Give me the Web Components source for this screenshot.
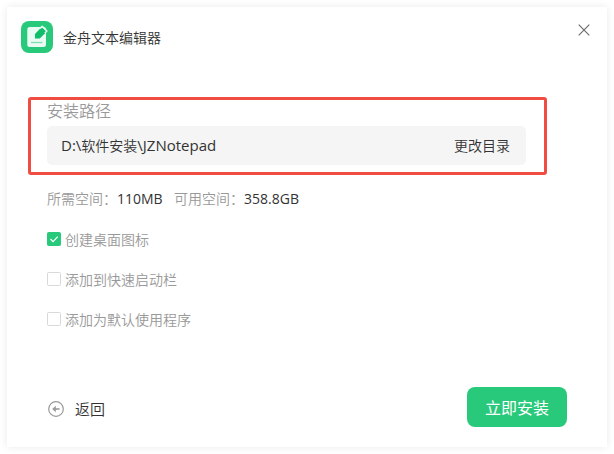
<!DOCTYPE html>
<html lang="zh-CN">
<head>
<meta charset="utf-8">
<title>金舟文本编辑器</title>
<style>
    body {
        margin: 0;
        padding: 7px;
        background-color: #fff;
        color: #333;
        font: 14px/20px "Open Sans", "Noto Sans CJK SC", sans-serif;
        overflow: hidden;
    }
</style>
</head>
<body>
<installer-window>
    <title-bar slot="title">金舟文本编辑器</title-bar>
    <path-field>
        <span slot="label">安装路径</span>
        <path-text>D:\<span>软件安装</span>\JZNotepad</path-text>
        <span slot="action">更改目录</span>
    </path-field>
    <disk-space>
        <span slot="need">110MB</span>
        <span slot="free">358.8GB</span>
    </disk-space>
    <check-option checked>创建桌面图标</check-option>
    <check-option>添加到快速启动栏</check-option>
    <check-option>添加为默认使用程序</check-option>
    <back-link slot="footer">返回</back-link>
    <primary-button slot="footer">立即安装</primary-button>
</installer-window>

<script>
function define(name, html) {
    const template = document.createElement('template');
    template.innerHTML = html;
    customElements.define(name, class extends HTMLElement {
        constructor() {
            super();
            const shadow = this.attachShadow({ mode: 'open' });
            shadow.appendChild(template.content.cloneNode(true));
        }
    });
}

// WINDOW
define('installer-window', `
    <style>
        :host {
            display: flex;
            flex-direction: column;
            box-sizing: border-box;
            width: 600px;
            height: 440px;
            background-color: #fff;
            box-shadow: 0 0 8px rgba(0, 0, 0, 0.09);
        }

        main {
            flex: 1;
            padding: 48px 40px 0;
        }

        footer {
            display: flex;
            justify-content: space-between;
            align-items: center;
            padding: 0 40px 20px;
        }
    </style>
    <slot name="title"></slot>
    <main><slot></slot></main>
    <footer><slot name="footer"></slot></footer>
`);

// TITLE BAR
define('title-bar', `
    <style>
        :host {
            display: flex;
            align-items: center;
            padding: 14px 16px 0 14px;
        }

        .name {
            flex: 1;
            margin: 2px 0 0 10px;
            font-weight: 350;
        }

        svg {
            display: block;
        }

        .close {
            margin-bottom: 14px;
        }
    </style>
    <svg width="32" height="32" viewBox="0 0 32 32">
        <rect width="32" height="32" rx="8" fill="#29c97b"/>
        <rect x="6.3" y="6" width="18.7" height="20" rx="2.5" fill="#e9fbf3"/>
        <path d="M14 17.5v-4.4l6.9-7.3 4.9 4.7-7 7z" fill="#10bd6a"/>
        <path d="M19.2 7.4l2-2 4.7 4.6-2 2.1" fill="none" stroke="#e9fbf3" stroke-width="1.5" stroke-linejoin="round"/>
        <path d="M10 21.5h11.5" stroke="#7fdfb1" stroke-width="1.3"/>
    </svg>
    <span class="name"><slot></slot></span>
    <svg class="close" width="14" height="14" viewBox="0 0 14 14">
        <path d="M1.7 1.7l10.6 10.6M12.3 1.7L1.7 12.3" stroke="#666" stroke-width="1.1"/>
    </svg>
`);

// INSTALL PATH
define('path-field', `
    <style>
        :host {
            display: block;
            position: relative;
            width: 479px;
        }

        .label {
            height: 25px;
            color: #999;
            font-size: 16px;
            font-weight: 350;
        }

        .box {
            display: flex;
            justify-content: space-between;
            align-items: center;
            box-sizing: border-box;
            height: 39px;
            padding: 0 16px 0 14px;
            border-radius: 5px;
            background-color: #f5f5f5;
            font-weight: 350;
        }

        /* highlight drawn over the field */
        .mark {
            position: absolute;
            inset: -4px -21px -10px -19px;
            border: 3px solid #f04c42;
            border-radius: 3px;
        }
    </style>
    <div class="label"><slot name="label"></slot></div>
    <div class="box"><slot></slot><slot name="action"></slot></div>
    <div class="mark"></div>
`);

define('path-text', `
    <style>
        :host {
            display: block;
            font-size: 15px;
            font-weight: 400;
            white-space: nowrap;
        }

        ::slotted(span) {
            font-size: 14px;
            font-weight: 350;
        }
    </style>
    <slot></slot>
`);

// DISK SPACE
define('disk-space', `
    <style>
        :host {
            display: flex;
            margin: 24px 0 20px;
            color: #999;
        }

        span {
            font-weight: 350;
        }

        .value {
            color: #333;
            font-weight: 400;
        }

        .need {
            width: 57px;
        }
    </style>
    <span>所需空间：</span><span class="value need"><slot name="need"></slot></span>
    <span>可用空间：</span><span class="value"><slot name="free"></slot></span>
`);

// CHECKBOX
define('check-option', `
    <style>
        :host {
            display: flex;
            align-items: center;
            gap: 4px;
            height: 20px;
            margin-bottom: 20px;
            color: #999;
            font-weight: 350;
        }

        svg {
            fill: #fff;
            stroke: #d9d9d9;
        }

        path {
            display: none;
        }

        :host([checked]) rect {
            fill: #29c97b;
            stroke: #29c97b;
        }

        :host([checked]) path {
            display: inline;
            fill: none;
            stroke: #fff;
            stroke-width: 1.2;
        }

        .text {
            padding-top: 2px;
        }
    </style>
    <svg width="14" height="14" viewBox="0 0 14 14">
        <rect x="0.5" y="0.5" width="13" height="13" rx="1"/>
        <path d="M3.5 7l2.6 2.6 4.6-5"/>
    </svg>
    <span class="text"><slot></slot></span>
`);

// FOOTER
define('back-link', `
    <style>
        :host {
            display: flex;
            align-items: center;
            gap: 10px;
            margin-top: 3px;
            font-size: 15px;
            font-weight: 350;
        }
    </style>
    <svg width="18" height="18" viewBox="0 0 18 18" fill="none" stroke="#999">
        <circle cx="9" cy="9" r="7.3" stroke-width="1.2"/>
        <path d="M7 9h5.5" stroke-width="1.6"/>
        <path d="M8.8 5.8L5.2 9l3.6 3.2z" fill="#999" stroke="none"/>
    </svg>
    <slot></slot>
`);

define('primary-button', `
    <style>
        :host {
            display: flex;
            justify-content: center;
            align-items: center;
            box-sizing: border-box;
            width: 100px;
            height: 40px;
            padding-top: 2px;
            border-radius: 8px;
            background-color: #29c97b;
            color: #fff;
            font-size: 16px;
        }
    </style>
    <slot></slot>
`);
</script>
</body>
</html>
